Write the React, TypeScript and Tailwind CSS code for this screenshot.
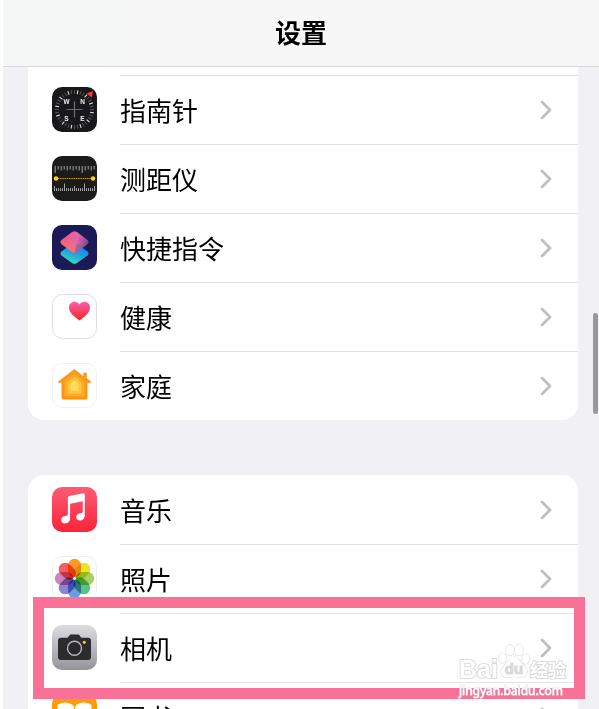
import type { ReactNode } from "react";

const ticks = Array.from({ length: 36 }, (_, i) => i * 10);

function CompassIcon() {
  return (
    <svg viewBox="0 0 45 45" className="size-full" aria-hidden="true">
      <rect width="45" height="45" rx="10" fill="#18181b" />
      {ticks.map((a) => (
        <path
          key={a}
          d="M22.5 3v3.800"
          stroke={a % 30 === 10 ? "#dcdcdc" : "#5c5c60"}
          strokeWidth={a % 30 === 10 ? 1.1 : 0.9}
          transform={`rotate(${a} 22.5 22.5)`}
        />
      ))}
      <path d="M22.5 14.500v16M14.500 22.500h16" stroke="#6d6d70" strokeWidth="1.200" />
      <path d="M34.500 6.500l6.500-2.500-1.200 6.600z" fill="#ff3a24" />
      <g fill="#f2f2f2" fontFamily="Liberation Sans, sans-serif" fontWeight="700" fontSize="6.500" textAnchor="middle">
        <text x="14.500" y="16.500">W</text>
        <text x="30.500" y="16.500">N</text>
        <text x="14.500" y="33.500">S</text>
        <text x="30.500" y="33.500">E</text>
      </g>
    </svg>
  );
}

function MeasureIcon() {
  const upper = Array.from({ length: 14 }, (_, i) => i);
  const lower = Array.from({ length: 21 }, (_, i) => i);
  return (
    <svg viewBox="0 0 45 45" className="size-full" aria-hidden="true">
      <rect width="45" height="45" rx="10" fill="#1b1b1c" />
      <g stroke="#b5b5b5" strokeWidth="0.900">
        {upper.map((i) => (
          <path key={i} d={`M${3.2 + i * 3} 10v${i === 0 || i === 9 ? 7 : i % 2 ? 3.5 : 4.5}`} />
        ))}
        {lower.map((i) => (
          <path key={i} d={`M${2.5 + i * 2} 35v-${i === 5 || i === 15 ? 7.5 : i % 5 === 0 ? 5 : 2.8}`} />
        ))}
      </g>
      <path d="M4 22.500h37" stroke="#c79d00" strokeWidth="1" strokeDasharray="1.300 .5" />
      <circle cx="4" cy="22.500" r="2.200" fill="#ffd60a" />
      <circle cx="41" cy="22.500" r="2.200" fill="#ffd60a" />
    </svg>
  );
}

function ShortcutsIcon() {
  return (
    <svg viewBox="0 0 45 45" className="size-full" aria-hidden="true">
      <defs>
        <linearGradient id="sc-top" x1="0.100" y1="0.300" x2="1" y2="0.600">
          <stop offset="0" stopColor="#ee5584" />
          <stop offset="0.500" stopColor="#e06aa6" />
          <stop offset="1" stopColor="#74408c" />
        </linearGradient>
        <linearGradient id="sc-warm" x1="0.700" y1="0" x2="0.300" y2="1">
          <stop offset="0.400" stopColor="#ff716b" stopOpacity="0" />
          <stop offset="1" stopColor="#ff7468" />
        </linearGradient>
        <linearGradient id="sc-bottom" x1="0.800" y1="0" x2="0.300" y2="1">
          <stop offset="0" stopColor="#1679f0" />
          <stop offset="0.500" stopColor="#209fe0" />
          <stop offset="1" stopColor="#36e6ae" />
        </linearGradient>
      </defs>
      <rect width="45" height="45" rx="10" fill="#1b1a56" />
      <path d="M20 19q2.500-1.700 5 0l10.500 7.500q2 2 0 4L25 38q-2.500 1.700-5 0L9.500 30.500q-2-2 0-4z" fill="url(#sc-bottom)" />
      <path d="M20 7q2.500-1.700 5 0l10.500 8q2 2 0 4L25 27q-2.500 1.700-5 0L9.500 19q-2-2 0-4z" fill="url(#sc-top)" />
      <path d="M20 7q2.500-1.700 5 0l10.500 8q2 2 0 4L25 27q-2.500 1.700-5 0L9.500 19q-2-2 0-4z" fill="url(#sc-warm)" />
      <path d="M25 19l8.500 1.500L25 27q-1.500 1-2.500.9z" fill="#4c62c4" opacity="0.500" />
    </svg>
  );
}

function HealthIcon() {
  return (
    <svg viewBox="0 0 45 45" className="size-full" aria-hidden="true">
      <defs>
        <linearGradient id="heart" x1="0" y1="0" x2="0" y2="1">
          <stop offset="0" stopColor="#fb5fa8" />
          <stop offset="1" stopColor="#fc2528" />
        </linearGradient>
      </defs>
      <rect x="0.500" y="0.500" width="44" height="44" rx="10" fill="#fff" stroke="#dedee0" />
      <path
        d="M27.500 26.500c-5.500-3.600-10.500-7.800-10.500-12.900 0-3.400 2.400-5.900 5.400-5.900 2.100 0 4 1 5.100 2.800 1.100-1.800 3-2.800 5.100-2.800 3 0 5.400 2.500 5.400 5.900 0 5.100-5 9.300-10.500 12.900z"
        fill="url(#heart)"
      />
    </svg>
  );
}

function HomeIcon() {
  return (
    <svg viewBox="0 0 45 45" className="size-full" aria-hidden="true">
      <defs>
        <linearGradient id="house" x1="0" y1="0" x2="0" y2="1">
          <stop offset="0" stopColor="#f99a25" />
          <stop offset="1" stopColor="#ff920c" />
        </linearGradient>
      </defs>
      <rect x="0.500" y="0.500" width="44" height="44" rx="10" fill="#fff" stroke="#f2f2f2" />
      <path
        d="M22.500 6 6.200 18.500q-1 1 .3 1.300h3V34.300q0 2.200 2.200 2.200h21.600q2.200 0 2.200-2.200V19.800h3q1.300-.3.300-1.300l-4-3.200V9.800h-3.500v3.400z"
        fill="url(#house)"
      />
      <path d="M22.500 11 12.500 18.500v15h20v-15z" fill="#ffac22" />
      <path d="M22.500 14 15.500 19.500v11.500h14V19.500z" fill="#ffc43b" />
      <path d="M22.500 17.500 18.500 20.800V28h8v-7.200z" fill="#ffdb58" />
    </svg>
  );
}

function MusicIcon() {
  return (
    <svg viewBox="0 0 45 45" className="size-full" aria-hidden="true">
      <defs>
        <linearGradient id="music" x1="0" y1="0" x2="0" y2="1">
          <stop offset="0" stopColor="#fb5c74" />
          <stop offset="1" stopColor="#fa2339" />
        </linearGradient>
      </defs>
      <rect width="45" height="45" rx="10" fill="url(#music)" />
      <path
        d="M31.200 6.200q1.600-.3 1.600 1.300V28.500c0 3-2.200 5-4.800 5-2.300 0-3.800-1.400-3.800-3.300 0-2.300 1.700-3.400 3.900-3.900 1.900-.4 2.700-.8 2.700-2.400V14.200l-12.700 2.600v14.500c0 3.200-2.300 5.200-5 5.200-2.400 0-4-1.500-4-3.500 0-2.300 1.700-3.500 4-4 1.800-.4 2.800-.8 2.800-2.500V10.800q0-1.500 1.400-1.800z"
        fill="#fff"
      />
    </svg>
  );
}

const petals = ["#f99a2b", "#ebe32c", "#a6d05f", "#5cc08f", "#6c9be0", "#9084ce", "#ca86bd", "#f3605f"];

function PhotosIcon() {
  return (
    <svg viewBox="0 0 45 45" className="size-full" aria-hidden="true">
      <rect x="0.500" y="0.500" width="44" height="44" rx="10" fill="#fff" stroke="#efeff0" />
      <g className="isolate">
        {petals.map((color, i) => (
          <rect
            key={color}
            x="16"
            y="2.800"
            width="13"
            height="18.700"
            rx="6.500"
            fill={color}
            className="mix-blend-multiply"
            transform={`rotate(${i * 45} 22.5 22.5)`}
          />
        ))}
      </g>
      <circle cx="22.500" cy="22.500" r="1.200" fill="#fff" />
    </svg>
  );
}

function CameraIcon() {
  return (
    <svg viewBox="0 0 45 45" className="size-full" aria-hidden="true">
      <defs>
        <linearGradient id="camera" x1="0" y1="0" x2="0" y2="1">
          <stop offset="0" stopColor="#dcdce1" />
          <stop offset="1" stopColor="#94949b" />
        </linearGradient>
      </defs>
      <rect width="45" height="45" rx="10" fill="url(#camera)" />
      <path
        d="M9 12.700h5.500c1.200 0 1.700-.3 2.200-1.200.7-1.400 1.300-2 2.800-2h6c1.500 0 2.100.6 2.800 2 .5.900 1 1.200 2.200 1.200H36q3 0 3 3V32q0 3-3 3H9q-3 0-3-3V15.700q0-3 3-3z"
        fill="#2c2c2e"
      />
      <circle cx="22.500" cy="23.200" r="7" fill="#29292b" stroke="#b8b8bd" strokeWidth="1.400" />
      <circle cx="32.300" cy="17.300" r="1.500" fill="#ffd60a" />
    </svg>
  );
}

function BooksIcon() {
  return (
    <svg viewBox="0 0 45 45" className="size-full" aria-hidden="true">
      <rect width="45" height="45" rx="10" fill="#ff9a0a" />
      <path
        d="M22 12.500C19.500 9.500 16.500 8.500 13.500 8.500c-3.500 0-6 1-8 2.800V34c5-3 11.500-3 16.500 1zM23 12.500c2.500-3 5.500-4 8.500-4 3.500 0 6 1 8 2.800V34c-5-3-11.500-3-16.500 1z"
        fill="#fff"
      />
    </svg>
  );
}

function Chevron() {
  return (
    <svg
      viewBox="0 0 12 20"
      className="h-5 w-3 shrink-0"
      fill="none"
      stroke="#bfbfc1"
      strokeWidth="2.800"
      strokeLinecap="round"
      strokeLinejoin="round"
      aria-hidden="true"
    >
      <path d="M2 2 10 10l-8 8" />
    </svg>
  );
}

type RowProps = { label: string; icon: ReactNode; divided?: boolean; children?: ReactNode };

function Row({ label, icon, divided = true, children }: RowProps) {
  return (
    <li className="relative">
      <a href="#" className="flex h-[69px] items-stretch gap-[23px] pl-6">
        <span className="size-[45px] shrink-0 self-center">{icon}</span>
        <span
          className={`flex flex-1 items-center justify-between border-t pr-[26px] text-[26px] leading-9 text-black ${divided ? "border-[#e1e1e4]" : "border-transparent"}`}
        >
          <span>{label}</span>
          <Chevron />
        </span>
      </a>
      {children}
    </li>
  );
}

function Watermark() {
  return (
    <div
      className="pointer-events-none absolute right-[11px] -bottom-[17px] z-20 flex w-[108px] flex-col text-white [paint-order:stroke_fill]"
      aria-hidden="true"
    >
      <div className="flex h-[38px] items-end pb-1 [-webkit-text-stroke:2px_#dcdcdc]">
        <span className="font-['Liberation_Sans',sans-serif] text-[25px] leading-5 font-bold">Bai</span>
        <svg viewBox="0 0 32 36" className="h-9 w-8 shrink-0" fill="#fff" stroke="#dcdcdc" strokeWidth="1.200">
          <ellipse cx="12" cy="7" rx="4" ry="5.500" />
          <ellipse cx="21" cy="7" rx="4" ry="5.500" />
          <ellipse cx="4.500" cy="15" rx="3.700" ry="5" />
          <ellipse cx="27.500" cy="16" rx="3.700" ry="5" />
          <path d="M16 14c4 0 5.500 4 8.500 7s5 5 4.500 8.500c-.5 3.500-3 5-6 5-2.500 0-4-1-7-1s-4.500 1-7 1c-3 0-5.500-1.500-6-5S5 24 7.500 21s4.500-7 8.500-7z" />
          <text
            x="16"
            y="30.500"
            textAnchor="middle"
            fontSize="15"
            fontWeight="700"
            fontFamily="Liberation Sans, sans-serif"
            fill="#d9d9d9"
            className="[-webkit-text-stroke:0px]"
          >
            du
          </text>
        </svg>
        <span className="text-[18px] leading-5 font-bold whitespace-nowrap">经验</span>
      </div>
      <span className="font-['Noto_Sans',sans-serif] text-[12px] leading-4 [-webkit-text-stroke:1px_#e2dde0]">
        jingyan.baidu.com
      </span>
    </div>
  );
}

export default function App() {
  return (
    <div className="relative flex h-screen flex-col overflow-hidden border-l-[3px] border-white bg-[#f0f0f5] font-['Noto_Sans_CJK_SC',sans-serif]">
      <header className="flex h-[67px] shrink-0 items-center justify-center border-b border-[#d8d8da] bg-linear-to-r from-[#f4f7f6] to-[#f7f7f7] to-35% pb-0.5">
        <h1 className="text-[26px] leading-9 font-bold text-black">设置</h1>
      </header>

      <main className="flex flex-col gap-[55px] pr-[21px] pl-[25px]">
        <ul className="rounded-b-[16px] bg-white pt-2">
          <Row label="指南针" icon={<CompassIcon />} />
          <Row label="测距仪" icon={<MeasureIcon />} />
          <Row label="快捷指令" icon={<ShortcutsIcon />} />
          <Row label="健康" icon={<HealthIcon />} />
          <Row label="家庭" icon={<HomeIcon />} />
        </ul>
        <ul className="rounded-t-[16px] bg-white">
          <Row label="音乐" icon={<MusicIcon />} divided={false} />
          <Row label="照片" icon={<PhotosIcon />} />
          <Row label="相机" icon={<CameraIcon />}>
            <div className="pointer-events-none absolute -top-4 -right-[7px] -bottom-[17px] left-[5px] z-10 border-[11px] border-[#f97196]" />
            <Watermark />
          </Row>
          <Row label="图书" icon={<BooksIcon />} />
        </ul>
      </main>

      <div className="absolute top-[313px] right-px h-[101px] w-[5px] rounded-full bg-[#98989d]" />
    </div>
  );
}
